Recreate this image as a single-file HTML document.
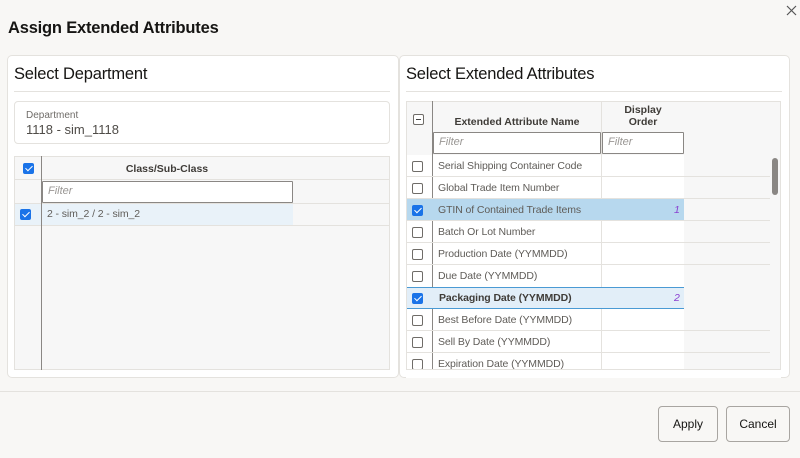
<!DOCTYPE html>
<html><head><style>
*{box-sizing:border-box;margin:0;padding:0}
body{width:800px;height:458px;background:#f8f7f5;font-family:"Liberation Sans",sans-serif;position:relative;overflow:hidden;color:#161513}
.a{position:absolute}
.panel{background:#fff;border:1px solid #e4e2de;border-radius:5px}
.h2{font-size:16.5px;color:#161513;letter-spacing:-0.2px}
.sep{height:1px;background:#e4e2de}
.cb{position:absolute;width:11px;height:11px;border:1px solid #6f6c68;border-radius:2px;background:#fff}
.cb.on{background:#1a73e8;border-color:#1a73e8}
.cb.on:after{content:"";position:absolute;left:3px;top:0px;width:3px;height:6px;border:solid #fff;border-width:0 1.6px 1.6px 0;transform:rotate(45deg)}
.t{font-size:10.5px;color:#5f5c58;position:absolute;white-space:nowrap;letter-spacing:-0.1px}
.filt{position:absolute;background:#fff;border:1px solid #8a8784;font-size:11px;font-style:italic;color:#9a9794;padding:3px 5px;border-radius:1px}
.btn{position:absolute;border:1px solid #a8a5a1;border-radius:4px;background:#f8f7f5;font-size:12px;color:#161513;text-align:center;line-height:34px}
</style></head><body>
<div class="a" style="left:8px;top:19px;font-size:16.5px;font-weight:bold;letter-spacing:-0.2px">Assign Extended Attributes</div>
<svg class="a" style="left:786px;top:5px" width="11" height="11" viewBox="0 0 11 11"><path d="M1 1L10 10M10 1L1 10" stroke="#555" stroke-width="1.2"/></svg>

<!-- left panel -->
<div class="a panel" style="left:7px;top:55px;width:392px;height:323px"></div>
<div class="a h2" style="left:14px;top:65px">Select Department</div>
<div class="a sep" style="left:14px;top:91px;width:376px"></div>
<div class="a" style="left:14px;top:101px;width:376px;height:43px;border:1px solid #e4e2de;border-radius:4px;background:#fff"></div>
<div class="a" style="left:26px;top:110px;font-size:10px;color:#6f6c68">Department</div>
<div class="a" style="left:26px;top:122px;font-size:13px;color:#4f4c48">1118 - sim_1118</div>
<div class="a" style="left:14px;top:156px;width:376px;height:214px;background:#f7f7f7;border:1px solid #e4e2de"></div>
<div class="a" style="left:14px;top:179px;width:376px;height:1px;background:#e4e2de"></div>
<div class="a" style="left:14px;top:203px;width:376px;height:1px;background:#e4e2de"></div>
<div class="a" style="left:14px;top:225px;width:376px;height:1px;background:#e4e2de"></div>
<div class="a" style="left:41px;top:156px;width:1px;height:214px;background:#8a8784"></div>
<div class="cb on" style="left:23px;top:163px"></div>
<div class="a" style="left:42px;top:163px;width:250px;text-align:center;font-size:10.5px;font-weight:bold;color:#3f3c38">Class/Sub-Class</div>
<div class="filt" style="left:42px;top:181px;width:251px;height:22px">Filter</div>
<div class="a" style="left:42px;top:204px;width:251px;height:21px;background:#e9f2f9"></div>
<div class="a" style="left:15px;top:204px;width:26px;height:21px;background:#e9f2f9"></div>
<div class="cb on" style="left:20px;top:209px"></div>
<div class="t" style="left:47px;top:208px">2 - sim_2 / 2 - sim_2</div>

<!-- right panel -->
<div class="a panel" style="left:399px;top:55px;width:391px;height:323px"></div>
<div class="a h2" style="left:406px;top:65px">Select Extended Attributes</div>
<div class="a sep" style="left:406px;top:91px;width:376px"></div>
<div class="a" style="left:406px;top:101px;width:375px;height:269px;background:#f7f7f7;border:1px solid #e4e2de"></div>
<div class="a" style="left:432px;top:101px;width:1px;height:269px;background:#8a8784"></div>
<div class="a" style="left:601px;top:101px;width:1px;height:269px;background:#e4e2de"></div>
<div class="a" style="left:413px;top:114px;width:11px;height:11px;border:1px solid #6f6c68;border-radius:2px;background:#fff"><div style="position:absolute;left:2px;top:4px;width:5px;height:1px;background:#444"></div></div>
<div class="a" style="left:433px;top:116px;width:168px;text-align:center;font-size:10.5px;font-weight:bold;color:#3f3c38">Extended Attribute Name</div>
<div class="a" style="left:602px;top:104px;width:82px;text-align:center;font-size:10.5px;font-weight:bold;color:#3f3c38;line-height:12px">Display<br>Order</div>
<div class="filt" style="left:433px;top:132px;width:168px;height:22px">Filter</div>
<div class="filt" style="left:602px;top:132px;width:82px;height:22px">Filter</div>
<div class="a" style="left:772px;top:158px;width:6px;height:37px;background:#8a8784;border-radius:3px"></div>

<div class="a" style="left:433px;top:155px;width:251px;height:215px;background:#fff"></div>
<div class="a" style="left:407px;top:155px;width:25px;height:215px;background:#fff"></div>
<div class="a" style="left:432px;top:155px;width:1px;height:215px;background:#8a8784"></div>
<div class="a" style="left:601px;top:155px;width:1px;height:215px;background:#e4e2de"></div>

<div class="a" style="left:407px;top:199px;width:277px;height:22px;background:#b7d8ee"></div>
<div class="a" style="left:407px;top:287px;width:277px;height:22px;background:#e2eef8;border-top:1px solid #4a9ad4;border-bottom:1px solid #4a9ad4"></div>

<div class="a" style="left:407px;top:176px;width:363px;height:1px;background:#e4e2de"></div>
<div class="a" style="left:407px;top:198px;width:363px;height:1px;background:#e4e2de"></div>
<div class="a" style="left:407px;top:220px;width:363px;height:1px;background:#e4e2de"></div>
<div class="a" style="left:407px;top:242px;width:363px;height:1px;background:#e4e2de"></div>
<div class="a" style="left:407px;top:264px;width:363px;height:1px;background:#e4e2de"></div>
<div class="a" style="left:407px;top:330px;width:363px;height:1px;background:#e4e2de"></div>
<div class="a" style="left:407px;top:352px;width:363px;height:1px;background:#e4e2de"></div>

<div class="cb" style="left:412px;top:161px"></div><div class="t" style="left:438px;top:160px">Serial Shipping Container Code</div>
<div class="cb" style="left:412px;top:183px"></div><div class="t" style="left:438px;top:182px">Global Trade Item Number</div>
<div class="cb on" style="left:412px;top:205px"></div><div class="t" style="left:438px;top:204px">GTIN of Contained Trade Items</div>
<div class="t" style="left:674px;top:204px;color:#8a3fd1;font-style:italic">1</div>
<div class="cb" style="left:412px;top:227px"></div><div class="t" style="left:438px;top:226px">Batch Or Lot Number</div>
<div class="cb" style="left:412px;top:249px"></div><div class="t" style="left:438px;top:248px">Production Date (YYMMDD)</div>
<div class="cb" style="left:412px;top:271px"></div><div class="t" style="left:438px;top:270px">Due Date (YYMMDD)</div>
<div class="cb on" style="left:412px;top:293px"></div><div class="t" style="left:439px;top:292px;font-weight:bold;color:#3f3c38">Packaging Date (YYMMDD)</div>
<div class="t" style="left:674px;top:292px;color:#8a3fd1;font-style:italic">2</div>
<div class="cb" style="left:412px;top:315px"></div><div class="t" style="left:438px;top:314px">Best Before Date (YYMMDD)</div>
<div class="cb" style="left:412px;top:337px"></div><div class="t" style="left:438px;top:336px">Sell By Date (YYMMDD)</div>
<div class="cb" style="left:412px;top:359px"></div><div class="t" style="left:438px;top:358px">Expiration Date (YYMMDD)</div>
<div class="a" style="left:406px;top:369px;width:375px;height:9px;background:#fff"></div>
<div class="a" style="left:406px;top:369px;width:375px;height:1px;background:#e4e2de"></div>

<div class="a" style="left:0;top:391px;width:800px;height:1px;background:#e4e2de"></div>
<div class="btn" style="left:658px;top:406px;width:60px;height:36px">Apply</div>
<div class="btn" style="left:726px;top:406px;width:64px;height:36px">Cancel</div>
</body></html>
